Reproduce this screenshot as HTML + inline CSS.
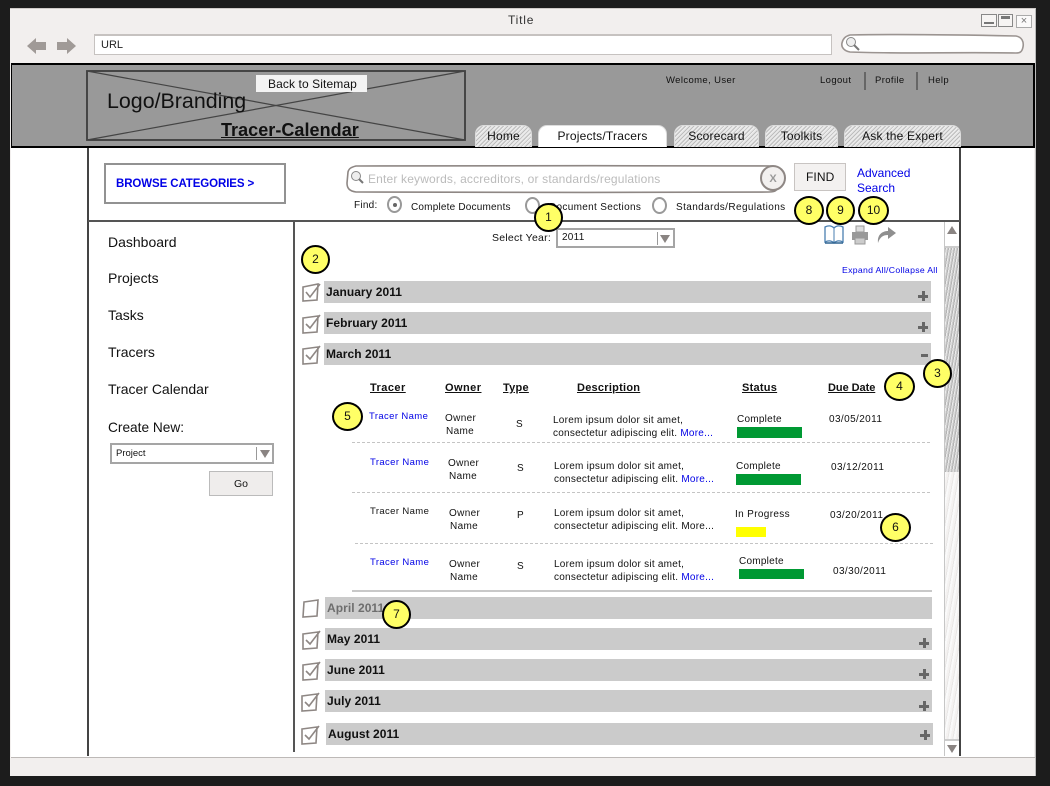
<!DOCTYPE html>
<html><head><meta charset="utf-8"><title>Tracer-Calendar</title>
<style>
html,body{margin:0;padding:0;width:1050px;height:786px;overflow:hidden;background:#1c1c1c}
body{position:relative;font-family:"Liberation Sans",Arial,sans-serif;color:#111}
.a{position:absolute}
.t{position:absolute;white-space:nowrap;line-height:1}
.s{font-size:10px;letter-spacing:.25px}
.n{font-size:9.5px;letter-spacing:.38px}
.d{font-size:10px;letter-spacing:.4px}
.b{color:#0000e6}
.h{font-size:11px;font-weight:bold;text-decoration:underline;letter-spacing:.25px}
.bar{position:absolute;height:22px;width:607px;background:#cbcbcb}
.bar b{position:absolute;left:2px;top:5px;font-size:12px;line-height:1;white-space:nowrap;letter-spacing:.05px}
.bar i{position:absolute;right:3px;top:9px;width:10px;height:10px;background:linear-gradient(#666,#666) center/10px 3px no-repeat,linear-gradient(#666,#666) center/3px 10px no-repeat}
.tab{position:absolute;top:125px;height:22px;border-radius:9px 9px 0 0;border:1px solid #ddd;border-bottom:0;box-sizing:border-box;font-size:12px;text-align:center;line-height:21px;background:repeating-linear-gradient(135deg,#e6e6e6 0 1px,#bdbdbd 1px 2px,#eee 2px 3px);letter-spacing:.2px}
.c{position:absolute;width:25px;height:25px;border:2.5px solid #000;border-radius:50%;background:#ffff66;font-size:12px;line-height:25px;text-align:center;color:#111}
.dash{position:absolute;height:0;border-top:1px dashed #c4c4c4}
.rad{position:absolute;width:15px;height:17px;border:2px solid #999;border-radius:50%;background:#fff;box-sizing:border-box}
</style></head><body>

<!-- window -->
<div class="a" style="left:10px;top:8px;width:1026px;height:768px;background:#f2efee;border-top:1px solid #cfcac8;border-right:1px solid #bbb;box-sizing:border-box"></div>
<div class="t" style="left:508px;top:14px;font-size:12px;letter-spacing:.8px;color:#333">Title</div>

<!-- window buttons -->
<div class="a" style="left:981px;top:14px;width:14px;height:11px;border:1px solid #888;background:#f6f4f3"><div class="a" style="left:2px;top:7px;width:10px;height:2px;background:#777"></div></div>
<div class="a" style="left:998px;top:14px;width:13px;height:11px;border:1px solid #888;background:#f6f4f3"><div class="a" style="left:2px;top:1px;width:9px;height:3px;background:#777"></div></div>
<div class="a" style="left:1016px;top:15px;width:14px;height:11px;border:1px solid #aaa;background:#fbfafa;font-size:11px;line-height:11px;text-align:center;color:#777">×</div>

<!-- nav arrows -->
<svg class="a" style="left:25px;top:36px" width="54" height="20" viewBox="0 0 54 20">
<path d="M2 10 L11 2 V6 H21 V14 H11 V18 Z" fill="#a09a97"/>
<path d="M51 10 L42 2 V6 H32 V14 H42 V18 Z" fill="#a09a97"/>
</svg>

<!-- URL bar -->
<div class="a" style="left:94px;top:34px;width:738px;height:21px;background:#fff;border:1px solid #c6c2c0;border-top:2px solid #c6c2c0;box-sizing:border-box"></div>
<div class="t" style="left:101px;top:40px;font-size:11px;color:#222">URL</div>

<!-- top search -->
<svg class="a" style="left:838px;top:32px" width="190" height="24" viewBox="0 0 190 24">
<path d="M12 3 C60 2 130 3 178 4 C184 5 186 10 185 15 C184 20 182 21 178 21 C120 20 60 22 12 20 C6 19 3 15 4 11 C5 6 8 4 12 3Z" fill="#fff" stroke="#9b9491" stroke-width="1.6"/>
<circle cx="13" cy="10" r="4.5" fill="#eee" stroke="#888"/><path d="M16 13 L21 18" stroke="#777" stroke-width="2"/>
</svg>

<!-- white page -->
<div class="a" style="left:11px;top:147px;width:1023px;height:610px;background:#fff"></div>

<!-- header -->
<div class="a" style="left:11px;top:63px;width:1024px;height:85px;background:#999;border:2px solid #000;border-left-width:1px;box-sizing:border-box"></div>

<!-- logo wireframe -->
<svg class="a" style="left:85px;top:69px" width="382" height="74" viewBox="0 0 382 74">
<rect x="2" y="2" width="378" height="69" fill="none" stroke="#3c3c3c" stroke-width="1.8"/>
<path d="M2 2 L380 71 M2 71 L380 2" stroke="#444" stroke-width="1.2" fill="none"/>
</svg>
<div class="a" style="left:256px;top:75px;width:111px;height:17px;background:#f3f3f3"></div>
<div class="t" style="left:268px;top:78px;font-size:12px;letter-spacing:.1px">Back to Sitemap</div>
<div class="t" style="left:107px;top:91px;font-size:21.4px">Logo/Branding</div>
<div class="t" style="left:221px;top:121px;font-size:18px;font-weight:bold;text-decoration:underline;letter-spacing:.05px">Tracer-Calendar</div>

<div class="t" style="left:666px;top:76px;font-size:9.5px;letter-spacing:.38px">Welcome, User</div>
<div class="t" style="left:820px;top:76px;font-size:9.5px;letter-spacing:.38px">Logout</div>
<div class="a" style="left:864px;top:72px;width:2px;height:18px;background:#666"></div>
<div class="t" style="left:875px;top:76px;font-size:9.5px;letter-spacing:.38px">Profile</div>
<div class="a" style="left:916px;top:72px;width:2px;height:18px;background:#666"></div>
<div class="t" style="left:928px;top:76px;font-size:9.5px;letter-spacing:.38px">Help</div>

<!-- tabs -->
<div class="tab" style="left:475px;width:57px">Home</div>
<div class="tab" style="left:538px;width:129px;background:#fff">Projects/Tracers</div>
<div class="tab" style="left:674px;width:85px">Scorecard</div>
<div class="tab" style="left:765px;width:73px">Toolkits</div>
<div class="tab" style="left:844px;width:117px">Ask the Expert</div>

<!-- main frame lines -->
<div class="a" style="left:87px;top:148px;width:2px;height:608px;background:#444"></div>
<div class="a" style="left:959px;top:148px;width:2px;height:608px;background:#444"></div>
<div class="a" style="left:88px;top:220px;width:872px;height:2px;background:#555"></div>
<div class="a" style="left:293px;top:221px;width:2px;height:531px;background:#555"></div>

<!-- browse -->
<div class="a" style="left:104px;top:163px;width:182px;height:41px;border:2px solid #929292;box-sizing:border-box"></div>
<div class="t b" style="left:116px;top:178px;font-size:11.5px;font-weight:bold;letter-spacing:-.1px;padding-top:1px">BROWSE CATEGORIES &gt;</div>

<!-- search -->
<svg class="a" style="left:344px;top:163px" width="446" height="32" viewBox="0 0 446 32">
<path d="M12 3 C120 2 300 3 428 3 C433 4 436 8 435 22 C433 28 431 29 425 29 C300 30 120 29 12 29 C6 28 3 26 3 20 L4 9 C5 5 8 4 12 3Z" fill="#fff" stroke="#8e8784" stroke-width="1.6"/>
<circle cx="12" cy="13" r="4.5" fill="#eee" stroke="#888"/><path d="M15 16 L19 20" stroke="#777" stroke-width="2"/>
<circle cx="429" cy="15" r="12" fill="#f2f0ef" stroke="#8e8784" stroke-width="2"/>
<text x="429" y="19" font-family="Liberation Sans" font-size="11" font-weight="bold" fill="#999" text-anchor="middle">X</text>
</svg>
<div class="t" style="left:368px;top:173px;font-size:12px;color:#bbb;letter-spacing:.17px">Enter keywords, accreditors, or standards/regulations</div>
<div class="a" style="left:794px;top:163px;width:52px;height:28px;background:#f3f1f0;border:1px solid #c8c4c2;box-sizing:border-box"></div>
<div class="t" style="left:806px;top:171px;font-size:12px;letter-spacing:.1px">FIND</div>
<div class="t b" style="left:857px;top:167px;font-size:12px">Advanced</div>
<div class="t b" style="left:857px;top:182px;font-size:12px">Search</div>

<div class="t s" style="left:354px;top:201px">Find:</div>
<div class="rad" style="left:387px;top:196px"></div><div class="a" style="left:393px;top:203px;width:4px;height:4px;border-radius:50%;background:#666"></div>
<div class="t s" style="left:411px;top:203px;letter-spacing:.2px">Complete Documents</div>
<div class="rad" style="left:525px;top:197px"></div>
<div class="t s" style="left:549px;top:203px;letter-spacing:.32px">Document Sections</div>
<div class="rad" style="left:652px;top:197px"></div>
<div class="t s" style="left:676px;top:203px;letter-spacing:.4px">Standards/Regulations</div>

<!-- sidebar -->
<div class="t" style="left:108px;top:235px;font-size:14px">Dashboard</div>
<div class="t" style="left:108px;top:271px;font-size:14px">Projects</div>
<div class="t" style="left:108px;top:308px;font-size:14px">Tasks</div>
<div class="t" style="left:108px;top:345px;font-size:14px">Tracers</div>
<div class="t" style="left:108px;top:382px;font-size:14px">Tracer Calendar</div>
<div class="t" style="left:108px;top:421px;font-size:13.7px">Create New:</div>
<div class="a" style="left:110px;top:443px;width:164px;height:21px;border:2px solid #a5a5a5;box-sizing:border-box;background:#fff"></div>
<div class="t" style="left:116px;top:449px;font-size:9.5px">Project</div>
<div class="a" style="left:256px;top:447px;width:1px;height:13px;background:#999"></div>
<div class="a" style="left:260px;top:450px;border-left:5px solid transparent;border-right:5px solid transparent;border-top:8px solid #8a8482"></div>
<div class="a" style="left:209px;top:471px;width:64px;height:25px;border:1px solid #bbb;box-sizing:border-box;background:#efedec"></div>
<div class="t" style="left:234px;top:479px;font-size:10.5px">Go</div>

<!-- year -->
<div class="t" style="left:492px;top:233px;font-size:10.5px;letter-spacing:.25px">Select Year:</div>
<div class="a" style="left:556px;top:228px;width:119px;height:20px;border:2px solid #a5a5a5;box-sizing:border-box;background:#fff"></div>
<div class="t s" style="left:562px;top:233px">2011</div>
<div class="a" style="left:657px;top:232px;width:1px;height:13px;background:#999"></div>
<div class="a" style="left:660px;top:235px;border-left:5px solid transparent;border-right:5px solid transparent;border-top:8px solid #8a8482"></div>

<!-- action icons -->
<svg class="a" style="left:823px;top:224px" width="80" height="22" viewBox="0 0 80 22">
<path d="M2 3 C6 1 9 2 11 4 C13 2 16 1 20 3 V18 C16 16 13 17 11 19 C9 17 6 16 2 18Z" fill="#fff" stroke="#4a7fb0" stroke-width="1.3"/>
<path d="M11 4 V19" stroke="#4a7fb0"/>
<path d="M2 19 H20" stroke="#2f6390" stroke-width="1.4"/>
<path d="M33 2 H41 V8 H33Z" fill="#ddd" stroke="#999"/>
<path d="M29 8 H45 V16 H29Z" fill="#999"/>
<path d="M32 14 H42 V20 H32Z" fill="#ccc" stroke="#999"/>
<path d="M55 19 C54 10 60 7 65 7 V3 L73 9 L65 15 V11 C60 11 57 13 55 19Z" fill="#8f8f8f"/>
</svg>
<div class="t b" style="left:842px;top:266px;font-size:8.7px;letter-spacing:.3px">Expand All/Collapse All</div>

<!-- scrollbar -->
<div class="a" style="left:944px;top:222px;width:15px;height:534px;background:repeating-linear-gradient(100deg,#f4f2f1 0 2px,#e8e6e5 2px 3px,#fafafa 3px 5px);border-left:1px solid #c6c6c6;box-sizing:border-box"></div>
<div class="a" style="left:945px;top:248px;width:14px;height:224px;background:repeating-linear-gradient(100deg,#b4b4b4 0 1px,#ebebeb 1px 2px,#cdcdcd 2px 3px)"></div>
<div class="a" style="left:945px;top:222px;width:14px;height:26px;background:#fff;border-bottom:2px solid #ccc;box-sizing:border-box"></div>
<div class="a" style="left:947px;top:226px;border-left:5px solid transparent;border-right:5px solid transparent;border-bottom:8px solid #8a8482"></div>
<div class="a" style="left:945px;top:739px;width:14px;height:17px;background:#fff;border-top:2px solid #ccc;box-sizing:border-box"></div>
<div class="a" style="left:947px;top:745px;border-left:5px solid transparent;border-right:5px solid transparent;border-top:8px solid #8a8482"></div>

<!-- bars -->
<div class="bar" style="left:324px;top:281px"><b>January 2011</b><i style="top:10px"></i></div>
<div class="bar" style="left:324px;top:312px"><b>February 2011</b><i style="top:10px"></i></div>
<div class="bar" style="left:324px;top:343px"><b>March 2011</b><div class="a" style="right:3px;top:11px;width:7px;height:3px;background:#666"></div></div>
<div class="bar" style="left:325px;top:597px"><b style="color:#6e6e6e">April 2011</b></div>
<div class="bar" style="left:325px;top:628px"><b>May 2011</b><i style="top:10px"></i></div>
<div class="bar" style="left:325px;top:659px"><b>June 2011</b><i style="top:10px"></i></div>
<div class="bar" style="left:325px;top:690px"><b>July 2011</b><i style="top:11px"></i></div>
<div class="bar" style="left:326px;top:723px"><b>August 2011</b><i style="top:7px"></i></div>

<!-- checkboxes -->
<svg class="a" style="left:298px;top:280px" width="24" height="470" viewBox="0 0 24 470" fill="none" stroke="#8e8784" stroke-width="1.6">
<path d="M5 7 L20 4 L19 20 L5 21Z"/><path d="M8 12 L12 17 L22 4"/>
<path d="M5 38 L20 36 L19 52 L5 53Z"/><path d="M8 44 L12 48 L22 35"/>
<path d="M5 69 L20 67 L19 83 L5 84Z"/><path d="M8 75 L12 79 L22 66"/>
<path d="M6 322 L20 320 L19 336 L5 337Z"/>
<path d="M5 354 L20 352 L19 368 L5 369Z"/><path d="M8 360 L12 364 L22 351"/>
<path d="M5 385 L20 383 L19 399 L5 400Z"/><path d="M8 391 L12 395 L22 382"/>
<path d="M4 416 L19 414 L18 430 L4 431Z"/><path d="M7 422 L11 426 L21 413"/>
<path d="M4 449 L19 447 L18 463 L4 464Z"/><path d="M7 455 L11 459 L21 446"/>
</svg>

<!-- table headers -->
<div class="t h" style="left:370px;top:383px;letter-spacing:.45px">Tracer</div>
<div class="t h" style="left:445px;top:383px;letter-spacing:.45px">Owner</div>
<div class="t h" style="left:503px;top:383px">Type</div>
<div class="t h" style="left:577px;top:383px">Description</div>
<div class="t h" style="left:742px;top:383px">Status</div>
<div class="t h" style="left:828px;top:383px;letter-spacing:-.05px">Due Date</div>

<!-- row 1 -->
<div class="t n b" style="left:369px;top:412px">Tracer Name</div>
<div class="t s" style="left:445px;top:414px;letter-spacing:.35px">Owner</div>
<div class="t s" style="left:446px;top:427px;letter-spacing:.35px">Name</div>
<div class="t s" style="left:516px;top:420px">S</div>
<div class="t s" style="left:553px;top:416px">Lorem ipsum dolor sit amet,</div>
<div class="t s" style="left:553px;top:429px">consectetur adipiscing elit. <span class="b">More...</span></div>
<div class="t s" style="left:737px;top:415px">Complete</div>
<div class="a" style="left:737px;top:427px;width:65px;height:11px;background:#009933"></div>
<div class="t d" style="left:829px;top:415px">03/05/2011</div>
<div class="dash" style="left:352px;top:442px;width:578px"></div>

<!-- row 2 -->
<div class="t n b" style="left:370px;top:458px">Tracer Name</div>
<div class="t s" style="left:448px;top:459px;letter-spacing:.35px">Owner</div>
<div class="t s" style="left:449px;top:472px;letter-spacing:.35px">Name</div>
<div class="t s" style="left:517px;top:464px">S</div>
<div class="t s" style="left:554px;top:462px">Lorem ipsum dolor sit amet,</div>
<div class="t s" style="left:554px;top:475px">consectetur adipiscing elit. <span class="b">More...</span></div>
<div class="t s" style="left:736px;top:462px">Complete</div>
<div class="a" style="left:736px;top:474px;width:65px;height:11px;background:#009933"></div>
<div class="t d" style="left:831px;top:463px">03/12/2011</div>
<div class="dash" style="left:352px;top:492px;width:578px"></div>

<!-- row 3 -->
<div class="t n" style="left:370px;top:507px">Tracer Name</div>
<div class="t s" style="left:449px;top:509px;letter-spacing:.35px">Owner</div>
<div class="t s" style="left:450px;top:522px;letter-spacing:.35px">Name</div>
<div class="t s" style="left:517px;top:511px">P</div>
<div class="t s" style="left:554px;top:509px">Lorem ipsum dolor sit amet,</div>
<div class="t s" style="left:554px;top:522px">consectetur adipiscing elit. More...</div>
<div class="t s" style="left:735px;top:510px;letter-spacing:.35px">In Progress</div>
<div class="a" style="left:736px;top:527px;width:30px;height:10px;background:#ffff00"></div>
<div class="t d" style="left:830px;top:511px">03/20/2011</div>
<div class="dash" style="left:355px;top:543px;width:578px"></div>

<!-- row 4 -->
<div class="t n b" style="left:370px;top:558px">Tracer Name</div>
<div class="t s" style="left:449px;top:560px;letter-spacing:.35px">Owner</div>
<div class="t s" style="left:450px;top:573px;letter-spacing:.35px">Name</div>
<div class="t s" style="left:517px;top:562px">S</div>
<div class="t s" style="left:554px;top:560px">Lorem ipsum dolor sit amet,</div>
<div class="t s" style="left:554px;top:573px">consectetur adipiscing elit. <span class="b">More...</span></div>
<div class="t s" style="left:739px;top:557px">Complete</div>
<div class="a" style="left:739px;top:569px;width:65px;height:10px;background:#009933"></div>
<div class="t d" style="left:833px;top:567px">03/30/2011</div>
<div class="a" style="left:352px;top:590px;width:580px;height:2px;background:#c8c8c8"></div>

<!-- status bar -->
<div class="a" style="left:11px;top:757px;width:1024px;height:18px;background:#f2efee;border-top:1px solid #bdb9b7;box-sizing:border-box"></div>

<!-- callouts -->
<div class="c" style="left:534px;top:203px">1</div>
<div class="c" style="left:301px;top:245px">2</div>
<div class="c" style="left:923px;top:359px">3</div>
<div class="c" style="left:884px;top:372px;width:27px">4</div>
<div class="c" style="left:332px;top:402px;width:27px">5</div>
<div class="c" style="left:880px;top:513px;width:27px">6</div>
<div class="c" style="left:382px;top:600px">7</div>
<div class="c" style="left:794px;top:196px;width:26px">8</div>
<div class="c" style="left:826px;top:196px">9</div>
<div class="c" style="left:858px;top:196px;width:27px">10</div>

</body></html>
